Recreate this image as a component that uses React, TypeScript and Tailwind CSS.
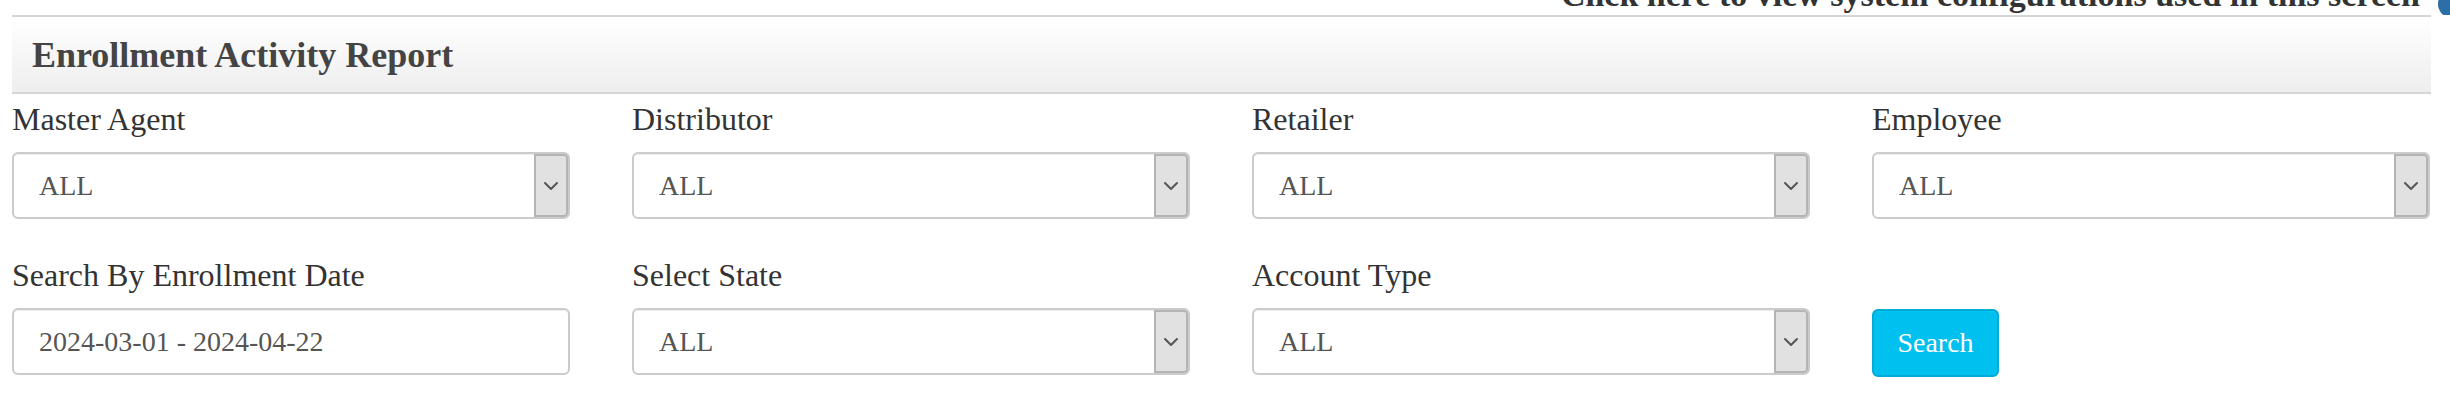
import { ChevronDown } from 'lucide-react';

const serif = { fontFamily: '"Liberation Serif", "Times New Roman", serif' };

function SelectBox({ value }: { value: string }) {
  return (
    <div className="flex h-[67px] w-full items-stretch rounded-[6px] border-2 border-[#cbcbcb] bg-white shadow-[inset_0_1px_1px_rgba(0,0,0,0.075)]">
      <div className="flex flex-1 items-center pl-[25px] text-[28px] text-[#555555]">{value}</div>
      <div className="flex w-[34px] items-center justify-center rounded-r-[4px] border-2 border-[#b4b4b4] bg-[#e1e1e1]">
        <ChevronDown size={24} strokeWidth={2} className="text-[#555555]" />
      </div>
    </div>
  );
}

function Field({ label, children }: { label: string; children: React.ReactNode }) {
  return (
    <div className="flex flex-col">
      <label className="h-[44px] text-[32px] leading-[44px] text-[#333333]">{label}</label>
      <div className="mt-[11px]">{children}</div>
    </div>
  );
}

export default function App() {
  return (
    <div className="h-[402px] w-[2450px] overflow-hidden bg-white" style={serif}>
      {/* clipped config link at the very top */}
      <div className="flex h-[15px] justify-end overflow-hidden">
        <span className="-mt-[22px] whitespace-nowrap text-[34px] font-bold leading-[34px] text-[#333333]">
          Click here to view system configurations used in this screen
        </span>
        <span className="-mt-[10px] ml-[18px] -mr-[16px] h-[28px] w-[28px] shrink-0 rounded-full bg-[#2c6ea6]" />
      </div>

      <div className="ml-[12px] flex h-[79px] w-[2419px] items-center border-y-2 border-[#d6d6d6] bg-gradient-to-b from-white to-[#eeeeee] pl-[20px]">
        <h3 className="text-[36px] font-bold leading-none text-[#444444]">Enrollment Activity Report</h3>
      </div>

      <div className="grid grid-cols-[repeat(4,558px)] gap-x-[62px] gap-y-[34px] pl-[12px] pt-[3px]">
        <Field label="Master Agent"><SelectBox value="ALL" /></Field>
        <Field label="Distributor"><SelectBox value="ALL" /></Field>
        <Field label="Retailer"><SelectBox value="ALL" /></Field>
        <Field label="Employee"><SelectBox value="ALL" /></Field>

        <Field label="Search By Enrollment Date">
          <div className="flex h-[67px] items-center rounded-[6px] border-2 border-[#cbcbcb] bg-white pl-[25px] text-[28px] text-[#555555] shadow-[inset_0_1px_1px_rgba(0,0,0,0.075)]">
            2024-03-01 - 2024-04-22
          </div>
        </Field>
        <Field label="Select State"><SelectBox value="ALL" /></Field>
        <Field label="Account Type"><SelectBox value="ALL" /></Field>
        <div className="flex flex-col">
          <div className="h-[44px]" />
          <div className="mt-[12px]">
            <button className="flex h-[68px] w-[127px] items-center justify-center rounded-[6px] border-2 border-[#00acd6] bg-[#00c0ef] text-[28px] text-white">
              Search
            </button>
          </div>
        </div>
      </div>
    </div>
  );
}
